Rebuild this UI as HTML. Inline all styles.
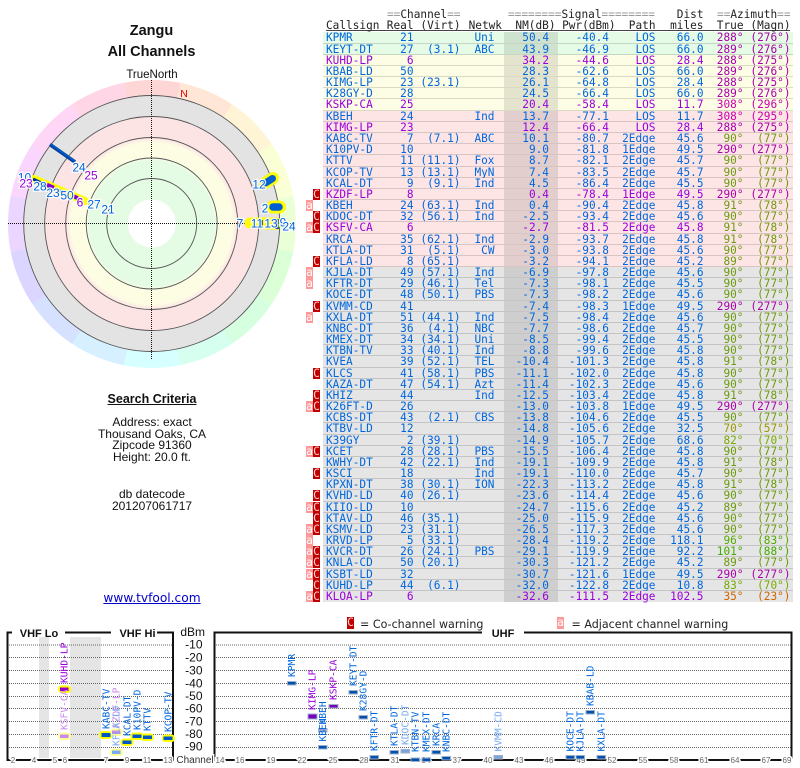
<!DOCTYPE html>
<html><head><meta charset="utf-8"><title>Zangu All Channels</title>
<style>
html,body{margin:0;padding:0;background:#fff;width:800px;height:768px;overflow:hidden}
#pg{position:relative;width:800px;height:768px;overflow:hidden;font-family:"DejaVu Sans Mono",monospace;font-size:11.1px;line-height:11px;color:#222;filter:blur(.35px);background:#fff}
.t{position:absolute;font-family:"Liberation Sans",sans-serif;text-align:center;white-space:pre;line-height:12px;color:#111;font-size:12px}
.h{position:absolute;white-space:pre;color:#222}
.h em{font-style:normal;color:#999}
.r{position:absolute;left:323px;width:470px;box-sizing:border-box;border-bottom:1px solid rgba(0,0,0,.14);color:#0066dd;background-image:linear-gradient(rgba(0,0,0,.1),rgba(0,0,0,.1));background-repeat:no-repeat;background-size:54px 100%;background-position:181px 0}
.r span{position:absolute;top:0;white-space:pre}
.r span:nth-of-type(1){left:3px}
.r span:nth-of-type(2){right:379.5px}
.r span:nth-of-type(3){right:332.5px}
.r span:nth-of-type(4){right:298.5px}
.r span:nth-of-type(5){right:244px}
.r span:nth-of-type(6){right:184px}
.r span:nth-of-type(7){right:137.5px}
.r span:nth-of-type(8){right:89.5px}
.r span:nth-of-type(9){right:49.5px}
.r span:nth-of-type(10){right:2.5px}
.g{background-color:#e5fbe5}.y{background-color:#fdfde5}.k{background-color:#fde5e5}.w{background-color:#e5e5e5}
.p{color:#9900dd}
.r .am{color:#aa00aa}.r .an{color:#cc00aa}.r .ao{color:#6d9a10}.r .aq{color:#999900}.r .as{color:#77aa00}.r .at{color:#55aa00}.r .au{color:#44aa00}.r .av{color:#cc6600}
.r i,.lg{position:absolute;top:0;width:7px;height:11px;font-style:normal;text-align:center;line-height:11px;overflow:hidden;color:#ffd0d0}
.r i.C,.lg.C{left:-10px;background:#c00000}
.r i.A{left:-17px;background:#ff9999;color:#fff}
.lg{top:617px;height:12px}
.lg.A{background:#ff9999;color:#fff}
</style></head><body><div id="pg">

<div class="t" style="left:90px;top:23px;width:123px;font-size:14.5px;line-height:16px;font-weight:bold">Zangu</div>
<div class="t" style="left:90px;top:44px;width:123px;font-size:14.5px;line-height:16px;font-weight:bold">All Channels</div>

<div style="position:absolute;left:8px;top:80px;width:288px;height:288px;border-radius:50%;background:conic-gradient(from -11.25deg,hsl(0,100%,92%) 0 22.5deg,hsl(22.5,100%,92%) 0 45deg,hsl(45,100%,92%) 0 67.5deg,hsl(67.5,100%,92%) 0 90deg,hsl(90,100%,92%) 0 112.5deg,hsl(112.5,100%,92%) 0 135deg,hsl(135,100%,92%) 0 157.5deg,hsl(157.5,100%,92%) 0 180deg,hsl(180,100%,92%) 0 202.5deg,hsl(202.5,100%,92%) 0 225deg,hsl(225,100%,92%) 0 247.5deg,hsl(247.5,100%,92%) 0 270deg,hsl(270,100%,92%) 0 292.5deg,hsl(292.5,100%,92%) 0 315deg,hsl(315,100%,92%) 0 337.5deg,hsl(337.5,100%,92%) 0 360deg)"></div>

<svg width="800" height="768" viewBox="0 0 800 768" style="position:absolute;left:0;top:0" font-family="Liberation Sans, sans-serif">
<defs><radialGradient id="b" gradientUnits="userSpaceOnUse" cx="151.7" cy="223.5" r="128">
<stop offset="0" stop-color="#e4fbe4"/><stop offset=".485" stop-color="#e4fbe4"/><stop offset=".52" stop-color="#fdfde4"/><stop offset=".63" stop-color="#fdfde4"/><stop offset=".67" stop-color="#fde4e4"/><stop offset=".835" stop-color="#fde4e4"/><stop offset=".84" stop-color="#e3e3e3"/><stop offset="1" stop-color="#e3e3e3"/></radialGradient></defs>
<text x="152" y="78" font-size="11.5" text-anchor="middle" fill="#111">TrueNorth</text>
<circle cx="151.7" cy="223.5" r="128" fill="url(#b)" stroke="#555" stroke-width=".9"/>
<g fill="none" stroke="#555" stroke-width=".9"><circle cx="151.7" cy="223.5" r="107"/><circle cx="151.7" cy="223.5" r="86"/><circle cx="151.7" cy="223.5" r="65.5"/><circle cx="151.7" cy="223.5" r="45"/></g>
<circle cx="151.7" cy="223.5" r="24" fill="#fff"/>
<g stroke="#111" stroke-width="1" stroke-dasharray="1 1"><path d="M8 223.5H296"/><path d="M151.5 80V360"/></g>
<text x="184" y="97" font-size="10.5" text-anchor="middle" fill="#dd0000">N</text>

<path d="M50 144.5L75 162" stroke="#003d99" stroke-width="3.6"/><path d="M51 144.5L75 161.3" stroke="#0060d0" stroke-width="1.4"/>
<path d="M34 179L85 201" stroke="#ffff00" stroke-width="8" stroke-linecap="round"/>
<path d="M33 179L50 187M57 190L66 193M74 197L83 201" stroke="#002f99" stroke-width="3"/>
<path d="M47 184.5L54 187.5M74 196L78 198" stroke="#8800cc" stroke-width="3.4"/>
<path d="M265 183L273 178" stroke="#ffff00" stroke-width="12" stroke-linecap="round"/><path d="M265.5 183L272.500 178.500" stroke="#0060d0" stroke-width="7" stroke-linecap="round"/>
<path d="M272.500 207H279.500" stroke="#ffff00" stroke-width="13" stroke-linecap="round"/><path d="M273 207H279" stroke="#0060d0" stroke-width="7.500" stroke-linecap="round"/>
<path d="M250 223H276" stroke="#ffff00" stroke-width="11" stroke-linecap="round"/><path d="M264 227H279" stroke="#ffff00" stroke-width="5"/>
<path d="M261 220V226M277 219V229" stroke="#003d99" stroke-width="3.500"/>
<g font-size="12" text-anchor="middle" fill="#0066dd" stroke="#fff" stroke-width="2.500" paint-order="stroke" stroke-opacity=".9">
<text x="79" y="171.500">24</text><text x="91" y="179.500" fill="#9900dd">25</text>
<text x="24.5" y="181.500">10</text><text x="26" y="187.500" fill="#9900dd">23</text>
<text x="40" y="190.500">28</text><text x="53" y="197">23</text><text x="67" y="199.500">50</text>
<text x="80" y="206.500" fill="#9900dd">6</text><text x="94" y="208.500">27</text><text x="108" y="213.500">21</text>
<text x="259" y="188.500">12</text><text x="265" y="212.500">2</text><text x="240" y="227.500">7</text>
<text x="257" y="227.500">11</text><text x="271" y="227.500">13</text><text x="283" y="226.500">9</text><text x="289" y="230.500">24</text>
</g>

<!-- VHF frame -->
<rect x="39" y="637" width="10" height="121" fill="#e5e5e5"/><rect x="70" y="637" width="31" height="121" fill="#e5e5e5"/>
<g stroke="#666" stroke-width="1" stroke-dasharray="1 1">
<path d="M9 645H172M9 657.500H172M9 670.500H172M9 683.500H172M9 696.500H172M9 708.500H172M9 721.500H172M9 734.500H172M9 747.500H172"/>
<path d="M216 645H791M216 657.500H791M216 670.500H791M216 683.500H791M216 696.500H791M216 708.500H791M216 721.500H791M216 734.500H791M216 747.500H791"/>
</g>
<g fill="none" stroke="#111" stroke-width="2">
<path d="M12 632.500H7.500V760H173V632.500H157M65 632.500H111"/>
<path d="M482 632.500H214.500V760H791.500V632.500H524"/>
</g>
<g font-size="11" font-weight="bold" fill="#111" text-anchor="middle"><text x="39" y="637">VHF Lo</text><text x="137.500" y="637">VHF Hi</text><text x="503" y="637">UHF</text></g>
<g font-size="12" fill="#111" text-anchor="end"><text x="205" y="636">dBm</text>
<text x="202.500" y="648.500">-10</text><text x="202.500" y="661.500">-20</text><text x="202.500" y="674.500">-30</text><text x="202.500" y="687.500">-40</text><text x="202.500" y="700">-50</text><text x="202.500" y="712.500">-60</text><text x="202.500" y="725.500">-70</text><text x="202.500" y="738">-80</text><text x="202.500" y="750.500">-90</text></g>
<text x="195" y="763" font-size="10" text-anchor="middle" fill="#333" stroke="#fff" stroke-width="3" paint-order="stroke">Channel</text>
<g font-size="8" text-anchor="middle" fill="#666" stroke="#fff" stroke-width="3" paint-order="stroke">
<text x="13" y="763">2</text><text x="34" y="763">4</text><text x="55" y="763">5</text><text x="65" y="763">6</text><text x="106" y="763">7</text><text x="127" y="763">9</text><text x="147" y="763">11</text><text x="168" y="763">13</text>
<text x="220" y="763">14</text><text x="240" y="763">16</text><text x="271" y="763">19</text><text x="302" y="763">22</text><text x="333" y="763">25</text><text x="364" y="763">28</text><text x="395" y="763">31</text><text x="426" y="763">34</text><text x="457" y="763">37</text><text x="488" y="763">40</text><text x="519" y="763">43</text><text x="549" y="763">46</text><text x="581" y="763">49</text><text x="612" y="763">52</text><text x="643" y="763">55</text><text x="674" y="763">58</text><text x="704" y="763">61</text><text x="735" y="763">64</text><text x="766" y="763">67</text><text x="787" y="763">69</text>
</g>

<!-- VHF bars -->
<g><rect x="58" y="685.500" width="13" height="7.500" rx="3.500" fill="#ffff00"/><rect x="58" y="732.500" width="13" height="7.500" rx="3.500" fill="#ffff99"/><rect x="99" y="731" width="13" height="8" rx="3.500" fill="#ffff00"/><rect x="110" y="728.500" width="13" height="7.500" rx="3.500" fill="#ffff99"/><rect x="110" y="748.500" width="13" height="7.500" rx="3.500" fill="#ffff99"/><rect x="120.500" y="738.500" width="13" height="7.500" rx="3.500" fill="#ffff00"/><rect x="130.500" y="732.500" width="13" height="7.500" rx="3.500" fill="#ffff00"/><rect x="141" y="733.500" width="13" height="7.500" rx="3.500" fill="#ffff00"/><rect x="162" y="734.500" width="13" height="7.500" rx="3.500" fill="#ffff00"/></g>
<g>
<rect x="60" y="687.500" width="8.500" height="3.500" fill="#9900cc"/><rect x="60" y="734.500" width="8.500" height="3.500" fill="#cc88ee"/>
<rect x="101.500" y="733" width="9" height="4" fill="#0058c8"/><rect x="112" y="730.500" width="8.500" height="3.500" fill="#cc88ee"/><rect x="112" y="750.500" width="8.500" height="3.500" fill="#77aaee"/><rect x="122.500" y="740.500" width="9" height="3.500" fill="#0058c8"/><rect x="132.500" y="734.500" width="9" height="3.500" fill="#0058c8"/><rect x="143" y="735.500" width="9" height="3.500" fill="#0058c8"/><rect x="163.500" y="736.500" width="9" height="3.500" fill="#0058c8"/>
</g>
<!-- UHF bars -->
<g fill="#0050b0" stroke="#9db0c8" stroke-width="1">
<rect x="287.500" y="681.500" width="8.500" height="3.500"/><rect x="349" y="690.500" width="8.500" height="3.500"/><rect x="359" y="715.500" width="8.500" height="3.500"/><rect x="329" y="704.500" width="9" height="3.500" fill="#7700bb"/><rect x="308" y="714" width="9" height="5" fill="#7700bb"/><rect x="318.500" y="745.500" width="8.500" height="3.500"/><rect x="318.500" y="728.500" width="8.500" height="3.500" fill="#aaaacc"/><rect x="370" y="755.500" width="8.500" height="3.500"/><rect x="390" y="750.500" width="8.500" height="3.500"/><rect x="401" y="749.500" width="8.500" height="3.500" fill="#7aa4dd"/><rect x="411" y="758" width="8.500" height="3.500"/><rect x="422" y="758" width="8.500" height="3.500"/><rect x="432" y="750.500" width="8.500" height="3.500"/><rect x="442" y="756.500" width="8.500" height="3.500"/><rect x="494" y="755.500" width="8.500" height="3.500" fill="#7aa4dd"/><rect x="566" y="755.500" width="8.500" height="3.500"/><rect x="576" y="755.500" width="8.500" height="3.500"/><rect x="586" y="710.500" width="8.500" height="3.500"/><rect x="597" y="755.500" width="8.500" height="3.500"/>
</g>
<!-- rotated labels -->
<g font-family="DejaVu Sans Mono, monospace" font-size="9.600" fill="#0066dd">
<text transform="translate(67.500 683) rotate(-90)" fill="#9900dd">KUHD-LP</text>
<text transform="translate(67.500 730) rotate(-90)" fill="#cc88ee">KSFV-CA</text>
<text transform="translate(109.500 729) rotate(-90)">KABC-TV</text>
<text transform="translate(119.500 728) rotate(-90)" fill="#cc88ee">KZDF-LP</text>
<text transform="translate(119.500 746) rotate(-90)" fill="#77aaee">KFLA-LD</text>
<text transform="translate(130.500 736) rotate(-90)">KCAL-DT</text>
<text transform="translate(140.500 730) rotate(-90)">K10PV-D</text>
<text transform="translate(150.500 731) rotate(-90)">KTTV</text>
<text transform="translate(171.500 732) rotate(-90)">KCOP-TV</text>
<text transform="translate(295 677) rotate(-90)">KPMR</text>
<text transform="translate(356.500 686) rotate(-90)">KEYT-DT</text>
<text transform="translate(366.500 711) rotate(-90)">K28GY-D</text>
<text transform="translate(336.500 700) rotate(-90)" fill="#9900dd">KSKP-CA</text>
<text transform="translate(315.500 710) rotate(-90)" fill="#9900dd">KIMG-LP</text>
<text transform="translate(326 741.500) rotate(-90)">KBEH</text>
<text transform="translate(326 724.500) rotate(-90)">KBEH</text>
<text transform="translate(377.500 751) rotate(-90)">KFTR-DT</text>
<text transform="translate(397.500 746) rotate(-90)">KTLA-DT</text>
<text transform="translate(408.500 745) rotate(-90)" fill="#77aaee">KDOC-DT</text>
<text transform="translate(418.500 752) rotate(-90)">KTBN-TV</text>
<text transform="translate(429.500 752) rotate(-90)">KMEX-DT</text>
<text transform="translate(439.500 746) rotate(-90)">KRCA</text>
<text transform="translate(449.500 752) rotate(-90)">KNBC-DT</text>
<text transform="translate(501.500 751.500) rotate(-90)" fill="#77aaee">KVMM-CD</text>
<text transform="translate(573.500 751.500) rotate(-90)">KOCE-DT</text>
<text transform="translate(583.500 751.500) rotate(-90)">KJLA-DT</text>
<text transform="translate(593.500 706) rotate(-90)">KBAB-LD</text>
<text transform="translate(604.500 751.500) rotate(-90)">KXLA-DT</text>
</g>
<!-- legend text -->
<g font-family="DejaVu Sans, sans-serif" font-size="11.100" fill="#222"><text x="360" y="628">= Co-channel warning</text><text x="571.500" y="628">= Adjacent channel warning</text></g>
<path d="M326 30.500H790" stroke="#444" stroke-width="1"/>
</svg>

<div class="t" style="left:90px;top:393px;width:124px;font-weight:bold;text-decoration:underline;font-size:12.500px">Search Criteria</div>
<div class="t" style="left:90px;top:416px;width:124px">Address: exact</div>
<div class="t" style="left:90px;top:428px;width:124px">Thousand Oaks, CA</div>
<div class="t" style="left:90px;top:439px;width:124px">Zipcode 91360</div>
<div class="t" style="left:90px;top:451px;width:124px">Height: 20.0 ft.</div>
<div class="t" style="left:90px;top:488px;width:124px">db datecode</div>
<div class="t" style="left:90px;top:500px;width:124px">201207061717</div>
<div class="t" style="left:90px;top:591px;width:124px;font-family:'DejaVu Sans',sans-serif;font-size:12.200px;line-height:14px;color:#0000cc;text-decoration:underline">www.tvfool.com</div>

<div class="lg C" style="left:347px;top:617px">C</div>
<div class="lg A" style="left:557px;top:617px">a</div>

<div class="h" style="left:387px;top:9px"><em>==</em>Channel<em>==</em></div>
<div class="h" style="left:508px;top:9px"><em>========</em>Signal<em>========</em></div>
<div class="h" style="right:96.500px;top:9px">Dist</div>
<div class="h" style="right:9.500px;top:9px"><em>==</em>Azimuth<em>==</em></div>
<div class="h" style="left:326px;top:20px">Callsign</div>
<div class="h" style="right:386.500px;top:20px">Real</div>
<div class="h" style="right:339.500px;top:20px">(Virt)</div>
<div class="h" style="right:298px;top:20px">Netwk</div>
<div class="h" style="right:244.500px;top:20px">NM(dB)</div>
<div class="h" style="right:184.500px;top:20px">Pwr(dBm)</div>
<div class="h" style="right:144.500px;top:20px">Path</div>
<div class="h" style="right:96.500px;top:20px">miles</div>
<div class="h" style="right:56.500px;top:20px">True</div>
<div class="h" style="right:9.500px;top:20px">(Magn)</div>

<div class="r g" style="top:32px;height:12px"><span>KPMR</span><span>21</span><span></span><span>Uni</span><span>50.4</span><span>-40.4</span><span>LOS</span><span>66.0</span><span class="am">288°</span><span class="am">(276°)</span></div>
<div class="r g" style="top:44px;height:11px"><span>KEYT-DT</span><span>27</span><span>(3.1)</span><span>ABC</span><span>43.9</span><span>-46.9</span><span>LOS</span><span>66.0</span><span class="am">289°</span><span class="am">(276°)</span></div>
<div class="r y p" style="top:55px;height:11px"><span>KUHD-LP</span><span>6</span><span></span><span></span><span>34.2</span><span>-44.6</span><span>LOS</span><span>28.4</span><span class="am">288°</span><span class="am">(275°)</span></div>
<div class="r y" style="top:66px;height:11px"><span>KBAB-LD</span><span>50</span><span></span><span></span><span>28.3</span><span>-62.6</span><span>LOS</span><span>66.0</span><span class="am">289°</span><span class="am">(276°)</span></div>
<div class="r y" style="top:77px;height:11px"><span>KIMG-LP</span><span>23</span><span>(23.1)</span><span></span><span>26.1</span><span>-64.8</span><span>LOS</span><span>28.4</span><span class="am">288°</span><span class="am">(275°)</span></div>
<div class="r y" style="top:88px;height:11px"><span>K28GY-D</span><span>28</span><span></span><span></span><span>24.5</span><span>-66.4</span><span>LOS</span><span>66.0</span><span class="am">289°</span><span class="am">(276°)</span></div>
<div class="r y p" style="top:99px;height:12px"><span>KSKP-CA</span><span>25</span><span></span><span></span><span>20.4</span><span>-58.4</span><span>LOS</span><span>11.7</span><span class="an">308°</span><span class="an">(296°)</span></div>
<div class="r k" style="top:111px;height:11px"><span>KBEH</span><span>24</span><span></span><span>Ind</span><span>13.7</span><span>-77.1</span><span>LOS</span><span>11.7</span><span class="an">308°</span><span class="an">(295°)</span></div>
<div class="r k p" style="top:122px;height:11px"><span>KIMG-LP</span><span>23</span><span></span><span></span><span>12.4</span><span>-66.4</span><span>LOS</span><span>28.4</span><span class="am">288°</span><span class="am">(275°)</span></div>
<div class="r k" style="top:133px;height:11px"><span>KABC-TV</span><span>7</span><span>(7.1)</span><span>ABC</span><span>10.1</span><span>-80.7</span><span>2Edge</span><span>45.6</span><span class="ao">90°</span><span class="ao">(77°)</span></div>
<div class="r k" style="top:144px;height:11px"><span>K10PV-D</span><span>10</span><span></span><span></span><span>9.0</span><span>-81.8</span><span>1Edge</span><span>49.5</span><span class="am">290°</span><span class="am">(277°)</span></div>
<div class="r k" style="top:155px;height:12px"><span>KTTV</span><span>11</span><span>(11.1)</span><span>Fox</span><span>8.7</span><span>-82.1</span><span>2Edge</span><span>45.7</span><span class="ao">90°</span><span class="ao">(77°)</span></div>
<div class="r k" style="top:167px;height:11px"><span>KCOP-TV</span><span>13</span><span>(13.1)</span><span>MyN</span><span>7.4</span><span>-83.5</span><span>2Edge</span><span>45.7</span><span class="ao">90°</span><span class="ao">(77°)</span></div>
<div class="r k" style="top:178px;height:11px"><span>KCAL-DT</span><span>9</span><span>(9.1)</span><span>Ind</span><span>4.5</span><span>-86.4</span><span>2Edge</span><span>45.5</span><span class="ao">90°</span><span class="ao">(77°)</span></div>
<div class="r k p" style="top:189px;height:11px"><i class="C">C</i><span>KZDF-LP</span><span>8</span><span></span><span></span><span>0.4</span><span>-78.4</span><span>1Edge</span><span>49.5</span><span class="am">290°</span><span class="am">(277°)</span></div>
<div class="r k" style="top:200px;height:11px"><i class="A">a</i><span>KBEH</span><span>24</span><span>(63.1)</span><span>Ind</span><span>0.4</span><span>-90.4</span><span>2Edge</span><span>45.8</span><span class="ao">91°</span><span class="ao">(78°)</span></div>
<div class="r k" style="top:211px;height:11px"><i class="C">C</i><span>KDOC-DT</span><span>32</span><span>(56.1)</span><span>Ind</span><span>-2.5</span><span>-93.4</span><span>2Edge</span><span>45.6</span><span class="ao">90°</span><span class="ao">(77°)</span></div>
<div class="r k p" style="top:222px;height:12px"><i class="A">a</i><i class="C">C</i><span>KSFV-CA</span><span>6</span><span></span><span></span><span>-2.7</span><span>-81.5</span><span>2Edge</span><span>45.8</span><span class="ao">91°</span><span class="ao">(78°)</span></div>
<div class="r k" style="top:234px;height:11px"><span>KRCA</span><span>35</span><span>(62.1)</span><span>Ind</span><span>-2.9</span><span>-93.7</span><span>2Edge</span><span>45.8</span><span class="ao">91°</span><span class="ao">(78°)</span></div>
<div class="r k" style="top:245px;height:11px"><span>KTLA-DT</span><span>31</span><span>(5.1)</span><span>CW</span><span>-3.0</span><span>-93.8</span><span>2Edge</span><span>45.6</span><span class="ao">90°</span><span class="ao">(77°)</span></div>
<div class="r k" style="top:256px;height:11px"><i class="C">C</i><span>KFLA-LD</span><span>8</span><span>(65.1)</span><span></span><span>-3.2</span><span>-94.1</span><span>2Edge</span><span>45.2</span><span class="ao">89°</span><span class="ao">(77°)</span></div>
<div class="r w" style="top:267px;height:11px"><i class="A">a</i><span>KJLA-DT</span><span>49</span><span>(57.1)</span><span>Ind</span><span>-6.9</span><span>-97.8</span><span>2Edge</span><span>45.6</span><span class="ao">90°</span><span class="ao">(77°)</span></div>
<div class="r w" style="top:278px;height:11px"><i class="A">a</i><span>KFTR-DT</span><span>29</span><span>(46.1)</span><span>Tel</span><span>-7.3</span><span>-98.1</span><span>2Edge</span><span>45.5</span><span class="ao">90°</span><span class="ao">(77°)</span></div>
<div class="r w" style="top:289px;height:12px"><span>KOCE-DT</span><span>48</span><span>(50.1)</span><span>PBS</span><span>-7.3</span><span>-98.2</span><span>2Edge</span><span>45.6</span><span class="ao">90°</span><span class="ao">(77°)</span></div>
<div class="r w" style="top:301px;height:11px"><i class="C">C</i><span>KVMM-CD</span><span>41</span><span></span><span></span><span>-7.4</span><span>-98.3</span><span>1Edge</span><span>49.5</span><span class="am">290°</span><span class="am">(277°)</span></div>
<div class="r w" style="top:312px;height:11px"><i class="A">a</i><span>KXLA-DT</span><span>51</span><span>(44.1)</span><span>Ind</span><span>-7.5</span><span>-98.4</span><span>2Edge</span><span>45.6</span><span class="ao">90°</span><span class="ao">(77°)</span></div>
<div class="r w" style="top:323px;height:11px"><span>KNBC-DT</span><span>36</span><span>(4.1)</span><span>NBC</span><span>-7.7</span><span>-98.6</span><span>2Edge</span><span>45.7</span><span class="ao">90°</span><span class="ao">(77°)</span></div>
<div class="r w" style="top:334px;height:11px"><span>KMEX-DT</span><span>34</span><span>(34.1)</span><span>Uni</span><span>-8.5</span><span>-99.4</span><span>2Edge</span><span>45.5</span><span class="ao">90°</span><span class="ao">(77°)</span></div>
<div class="r w" style="top:345px;height:11px"><span>KTBN-TV</span><span>33</span><span>(40.1)</span><span>Ind</span><span>-8.8</span><span>-99.6</span><span>2Edge</span><span>45.8</span><span class="ao">90°</span><span class="ao">(77°)</span></div>
<div class="r w" style="top:356px;height:12px"><span>KVEA</span><span>39</span><span>(52.1)</span><span>TEL</span><span>-10.4</span><span>-101.3</span><span>2Edge</span><span>45.8</span><span class="ao">91°</span><span class="ao">(78°)</span></div>
<div class="r w" style="top:368px;height:11px"><i class="C">C</i><span>KLCS</span><span>41</span><span>(58.1)</span><span>PBS</span><span>-11.1</span><span>-102.0</span><span>2Edge</span><span>45.8</span><span class="ao">90°</span><span class="ao">(77°)</span></div>
<div class="r w" style="top:379px;height:11px"><span>KAZA-DT</span><span>47</span><span>(54.1)</span><span>Azt</span><span>-11.4</span><span>-102.3</span><span>2Edge</span><span>45.6</span><span class="ao">90°</span><span class="ao">(77°)</span></div>
<div class="r w" style="top:390px;height:11px"><i class="C">C</i><span>KHIZ</span><span>44</span><span></span><span>Ind</span><span>-12.5</span><span>-103.4</span><span>2Edge</span><span>45.8</span><span class="ao">91°</span><span class="ao">(78°)</span></div>
<div class="r w" style="top:401px;height:11px"><i class="A">a</i><i class="C">C</i><span>K26FT-D</span><span>26</span><span></span><span></span><span>-13.0</span><span>-103.8</span><span>1Edge</span><span>49.5</span><span class="am">290°</span><span class="am">(277°)</span></div>
<div class="r w" style="top:412px;height:11px"><span>KCBS-DT</span><span>43</span><span>(2.1)</span><span>CBS</span><span>-13.8</span><span>-104.6</span><span>2Edge</span><span>45.5</span><span class="ao">90°</span><span class="ao">(77°)</span></div>
<div class="r w" style="top:423px;height:12px"><span>KTBV-LD</span><span>12</span><span></span><span></span><span>-14.8</span><span>-105.6</span><span>2Edge</span><span>32.5</span><span class="aq">70°</span><span class="aq">(57°)</span></div>
<div class="r w" style="top:435px;height:11px"><span>K39GY</span><span>2</span><span>(39.1)</span><span></span><span>-14.9</span><span>-105.7</span><span>2Edge</span><span>68.6</span><span class="as">82°</span><span class="as">(70°)</span></div>
<div class="r w" style="top:446px;height:11px"><i class="A">a</i><i class="C">C</i><span>KCET</span><span>28</span><span>(28.1)</span><span>PBS</span><span>-15.5</span><span>-106.4</span><span>2Edge</span><span>45.8</span><span class="ao">90°</span><span class="ao">(77°)</span></div>
<div class="r w" style="top:457px;height:11px"><span>KWHY-DT</span><span>42</span><span>(22.1)</span><span>Ind</span><span>-19.1</span><span>-109.9</span><span>2Edge</span><span>45.8</span><span class="ao">91°</span><span class="ao">(78°)</span></div>
<div class="r w" style="top:468px;height:11px"><i class="C">C</i><span>KSCI</span><span>18</span><span></span><span>Ind</span><span>-19.1</span><span>-110.0</span><span>2Edge</span><span>45.7</span><span class="ao">90°</span><span class="ao">(77°)</span></div>
<div class="r w" style="top:479px;height:11px"><span>KPXN-DT</span><span>38</span><span>(30.1)</span><span>ION</span><span>-22.3</span><span>-113.2</span><span>2Edge</span><span>45.8</span><span class="ao">91°</span><span class="ao">(78°)</span></div>
<div class="r w" style="top:490px;height:12px"><i class="C">C</i><span>KVHD-LD</span><span>40</span><span>(26.1)</span><span></span><span>-23.6</span><span>-114.4</span><span>2Edge</span><span>45.6</span><span class="ao">90°</span><span class="ao">(77°)</span></div>
<div class="r w" style="top:502px;height:11px"><i class="A">a</i><i class="C">C</i><span>KIIO-LD</span><span>10</span><span></span><span></span><span>-24.7</span><span>-115.6</span><span>2Edge</span><span>45.2</span><span class="ao">89°</span><span class="ao">(77°)</span></div>
<div class="r w" style="top:513px;height:11px"><i class="C">C</i><span>KTAV-LD</span><span>46</span><span>(35.1)</span><span></span><span>-25.0</span><span>-115.9</span><span>2Edge</span><span>45.6</span><span class="ao">90°</span><span class="ao">(77°)</span></div>
<div class="r w" style="top:524px;height:11px"><i class="A">a</i><i class="C">C</i><span>KSMV-LD</span><span>23</span><span>(31.1)</span><span></span><span>-26.5</span><span>-117.3</span><span>2Edge</span><span>45.6</span><span class="ao">90°</span><span class="ao">(77°)</span></div>
<div class="r w" style="top:535px;height:11px"><i class="A">a</i><span>KRVD-LP</span><span>5</span><span>(33.1)</span><span></span><span>-28.4</span><span>-119.2</span><span>2Edge</span><span>118.1</span><span class="at">96°</span><span class="at">(83°)</span></div>
<div class="r w" style="top:546px;height:11px"><i class="A">a</i><i class="C">C</i><span>KVCR-DT</span><span>26</span><span>(24.1)</span><span>PBS</span><span>-29.1</span><span>-119.9</span><span>2Edge</span><span>92.2</span><span class="au">101°</span><span class="au">(88°)</span></div>
<div class="r w" style="top:557px;height:12px"><i class="A">a</i><i class="C">C</i><span>KNLA-CD</span><span>50</span><span>(20.1)</span><span></span><span>-30.3</span><span>-121.2</span><span>2Edge</span><span>45.2</span><span class="ao">89°</span><span class="ao">(77°)</span></div>
<div class="r w" style="top:569px;height:11px"><i class="A">a</i><i class="C">C</i><span>KSBT-LD</span><span>32</span><span></span><span></span><span>-30.7</span><span>-121.6</span><span>1Edge</span><span>49.5</span><span class="am">290°</span><span class="am">(277°)</span></div>
<div class="r w" style="top:580px;height:11px"><i class="C">C</i><span>KUHD-LP</span><span>44</span><span>(6.1)</span><span></span><span>-32.0</span><span>-122.8</span><span>2Edge</span><span>10.8</span><span class="as">83°</span><span class="as">(70°)</span></div>
<div class="r w p" style="top:591px;height:11px;border-bottom:0"><i class="A">a</i><i class="C">C</i><span>KLOA-LP</span><span>6</span><span></span><span></span><span>-32.6</span><span>-111.5</span><span>2Edge</span><span>102.5</span><span class="av">35°</span><span class="av">(23°)</span></div>

</div></body></html>
